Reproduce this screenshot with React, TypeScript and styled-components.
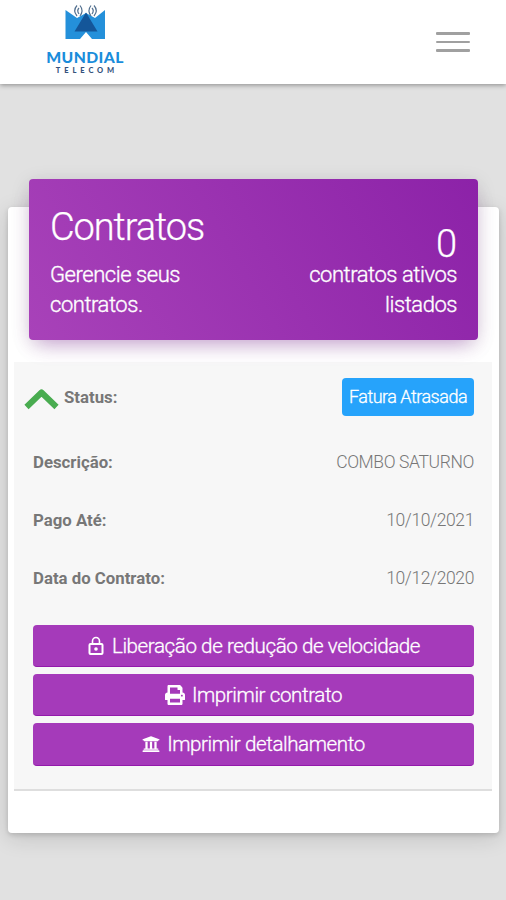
import React from "react";
import styled, { createGlobalStyle } from "styled-components";
import { FaPrint, FaUniversity } from "react-icons/fa";

const GlobalStyle = createGlobalStyle`
  * { box-sizing: border-box; }
  body { margin: 0; background: #e1e1e1; font-family: Roboto, "Liberation Sans", sans-serif; }
`;

const Page = styled.div`
  height: 900px;
  overflow: hidden;
  background: #e1e1e1;
`;

const Header = styled.header`
  height: 84px;
  padding: 0 36px 0 46px;
  display: flex;
  justify-content: space-between;
  background: #fff;
  box-shadow: 0 1px 5px rgba(0, 0, 0, 0.4);
`;

const Brand = styled.div`
  width: 78px;
  padding-top: 4px;
  display: flex;
  flex-direction: column;
  align-items: center;
`;

const BrandMark = styled.svg`
  display: block;
  width: 42px;
  height: 36px;
`;

const BrandName = styled.div`
  margin-top: 9px;
  white-space: nowrap;
  font: 900 15.7px/17px Lato, sans-serif;
  letter-spacing: 0.4px;
  color: #1a8ddb;
`;

const BrandSub = styled.div`
  margin: 1px -4px 0 0;
  white-space: nowrap;
  font: 900 7.5px/8px Lato, sans-serif;
  letter-spacing: 3.9px;
  color: #35527c;
`;

const MenuButton = styled.button`
  width: 34px;
  height: 84px;
  padding: 0;
  border: 0;
  background: none;
  display: flex;
  flex-direction: column;
  justify-content: center;
  gap: 6px;
`;

const MenuBar = styled.span`
  height: 2.6px;
  flex: none;
  width: 34px;
  background: #a0a0a0;
  border-radius: 1px;
`;

const Card = styled.main`
  height: 626px;
  margin: 123px 7px 0 8px;
  padding: 0 7px 0 6px;
  border-radius: 4px;
  background: #fff;
  box-shadow: 0 2px 5px rgba(0, 0, 0, 0.14), 0 5px 22px rgba(0, 0, 0, 0.14);
`;

const Banner = styled.section`
  position: relative;
  top: -28px;
  height: 161px;
  margin: 0 14px -6px 15px;
  padding: 28px 21px 0;
  display: flex;
  justify-content: space-between;
  border-radius: 4px;
  color: #fff;
  background: linear-gradient(60deg, #a842b9, #8c22a8);
  box-shadow: 0 10px 20px -8px rgba(142, 36, 170, 0.4), 0 4px 20px rgba(0, 0, 0, 0.12);
`;

const BannerColumn = styled.div<{ $end?: boolean }>`
  padding-top: ${(p) => (p.$end ? 22 : 0)}px;
  text-align: ${(p) => (p.$end ? "right" : "left")};
`;

const Title = styled.h1`
  margin: 0;
  font-size: 38px;
  line-height: 40px;
  font-weight: 300;
  letter-spacing: -1.1px;
  -webkit-text-stroke: 0.25px #fff;
`;

const Counter = styled(Title)`
  letter-spacing: 0;
  line-height: 31px;
`;

const BannerText = styled.p<{ $gap: number }>`
  margin: ${(p) => p.$gap}px 0 0;
  font-size: 22px;
  line-height: 30px;
  font-weight: 300;
  letter-spacing: -0.45px;
  -webkit-text-stroke: 0.35px #fff;
`;

const Details = styled.section`
  height: 429px;
  padding: 16px 18px 0 19px;
  background: #f7f7f7;
  border-bottom: 2px solid #dedede;
`;

const Row = styled.div<{ $height: number; $outdent?: boolean }>`
  height: ${(p) => p.$height}px;
  margin-left: ${(p) => (p.$outdent ? -10 : 0)}px;
  display: flex;
  align-items: center;
  justify-content: space-between;
`;

const FirstRow = styled(Row)`
  margin-bottom: 16px;
`;

const Label = styled.span`
  display: flex;
  align-items: center;
  font-size: 16.8px;
  font-weight: 700;
  color: #777;
`;

const Value = styled.span`
  font-size: 17.5px;
  font-weight: 300;
  letter-spacing: -0.38px;
  color: #777;
`;

const Chevron = styled.svg`
  width: 37px;
  height: 24px;
  margin: 5px 4px 0 0;
`;

const Badge = styled.span`
  width: 132px;
  height: 38px;
  border-radius: 4px;
  background: #26a3fb;
  color: #fff;
  font-size: 18px;
  font-weight: 300;
  letter-spacing: -0.5px;
  line-height: 38px;
  -webkit-text-stroke: 0.3px #fff;
  text-align: center;
  white-space: nowrap;
`;

const Actions = styled.div`
  margin-top: 18px;
  display: flex;
  flex-direction: column;
  gap: 7px;
`;

const ActionButton = styled.button`
  height: 42.2px;
  padding: 0;
  border: 0;
  border-bottom: 1px solid #9319ab;
  border-radius: 4px;
  background: #a53aba;
  color: #fff;
  display: flex;
  align-items: center;
  justify-content: center;
  gap: 7px;
  font: 300 20.6px/42px Roboto, sans-serif;
  letter-spacing: -0.42px;
  white-space: nowrap;
`;

const ActionLabel = styled.span`
  -webkit-text-stroke: 0.3px #fff;
`;

const LockIcon = styled.svg`
  width: 18px;
  height: 20px;
`;

const rows = [
  { label: "Descrição:", value: "COMBO SATURNO", height: 59 },
  { label: "Pago Até:", value: "10/10/2021", height: 58 },
  { label: "Data do Contrato:", value: "10/12/2020", height: 58 },
];

export default function App() {
  return (
    <>
      <GlobalStyle />
      <Page>
        <Header>
          <Brand>
            <BrandMark viewBox="0 0 42 36">
              <path d="M1.5 6 L13 14 L22 9 L31 14 L41 6 V35 H28 L22 28 L16 35 H1.5Z" fill="#2490da" />
              <path d="M22 8.5 L33.5 27.5 H10.5Z" fill="#145699" />
              <g fill="none" stroke="#52708f" strokeWidth="1.2">
                <path d="M13 1.5 Q8.5 6.5 13 12 M15 4 Q12.5 6.5 15 10 M16 1.5 Q20 6.5 16 12" />
                <path d="M30 1.5 Q34.5 6.5 30 12 M28 4 Q30.5 6.5 28 10 M27 1.5 Q23 6.5 27 12" />
              </g>
            </BrandMark>
            <BrandName>MUNDIAL</BrandName>
            <BrandSub>TELECOM</BrandSub>
          </Brand>
          <MenuButton aria-label="Menu">
            <MenuBar />
            <MenuBar />
            <MenuBar />
          </MenuButton>
        </Header>
        <Card>
          <Banner>
            <BannerColumn>
              <Title>Contratos</Title>
              <BannerText $gap={13}>
                Gerencie seus
                <br />
                contratos.
              </BannerText>
            </BannerColumn>
            <BannerColumn $end>
              <Counter as="div">0</Counter>
              <BannerText $gap={0}>
                contratos ativos
                <br />
                listados
              </BannerText>
            </BannerColumn>
          </Banner>
          <Details>
            <FirstRow $height={38} $outdent>
              <Label>
                <Chevron viewBox="0 0 37 24">
                  <path
                    d="M3.5 19 L18.5 4.5 L33.5 19"
                    fill="none"
                    stroke="#49ac50"
                    strokeWidth="6"
                    strokeLinejoin="round"
                  />
                </Chevron>
                Status:
              </Label>
              <Badge>Fatura Atrasada</Badge>
            </FirstRow>
            {rows.map((row) => (
              <Row key={row.label} $height={row.height}>
                <Label>{row.label}</Label>
                <Value>{row.value}</Value>
              </Row>
            ))}
            <Actions>
              <ActionButton>
                <LockIcon viewBox="0 0 18 20">
                  <rect x="2.5" y="8" width="13" height="10" rx="1" fill="none" stroke="#fff" strokeWidth="2" />
                  <path d="M5.5 8 V5 a3.5 3.5 0 0 1 7 0 V8" fill="none" stroke="#fff" strokeWidth="1.6" />
                  <circle cx="9" cy="13" r="1.8" fill="#fff" />
                </LockIcon>
                <ActionLabel>Liberação de redução de velocidade</ActionLabel>
              </ActionButton>
              <ActionButton>
                <FaPrint size={20} />
                <ActionLabel>Imprimir contrato</ActionLabel>
              </ActionButton>
              <ActionButton>
                <FaUniversity size={18} />
                <ActionLabel>Imprimir detalhamento</ActionLabel>
              </ActionButton>
            </Actions>
          </Details>
        </Card>
      </Page>
    </>
  );
}
